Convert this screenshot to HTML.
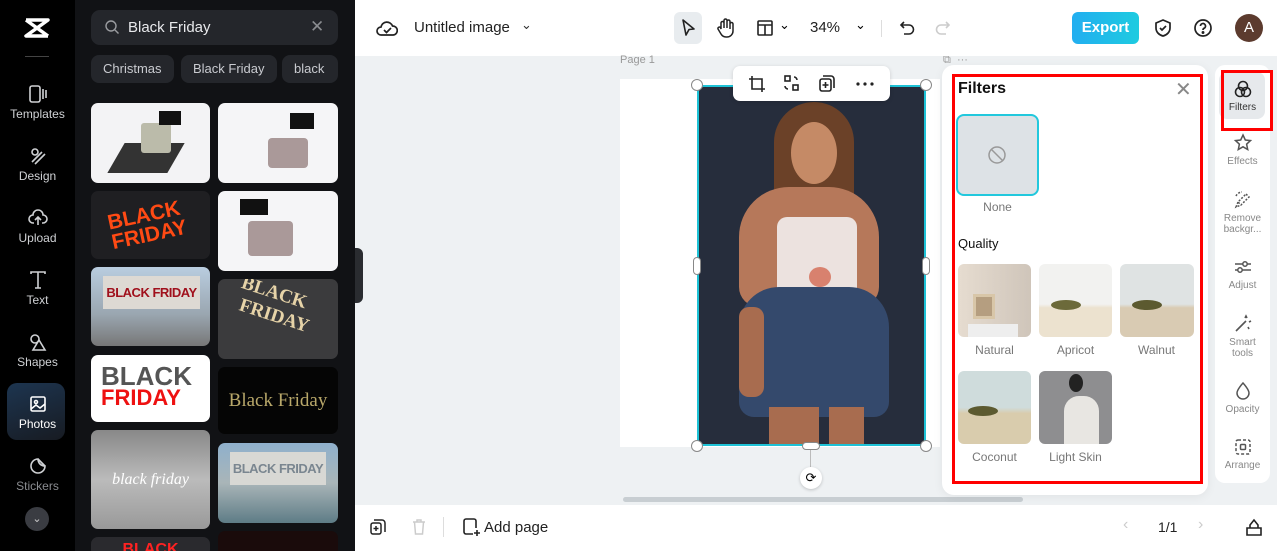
<!DOCTYPE html>
<html><head><meta charset="utf-8">
<style>
*{box-sizing:border-box;margin:0;padding:0}
html,body{width:1277px;height:551px;overflow:hidden}
body{font-family:"Liberation Sans",sans-serif;background:#eef1f3;position:relative}
.abs{position:absolute}
.rail{left:0;top:0;width:75px;height:551px;background:#000}
.ri{position:absolute;left:0;width:75px;text-align:center;color:#cfd1d4;font-size:12px}
.ri svg{display:block;margin:0 auto 3px}
.panel{left:75px;top:0;width:280px;height:551px;background:#111215}
.th{position:absolute;border-radius:7px;overflow:hidden;white-space:nowrap}
.chip{position:absolute;top:55px;height:28px;border-radius:8px;background:#24262b;color:#c9cbd0;font-size:13px;line-height:28px;padding:0 12px;white-space:nowrap}
.top{left:355px;top:0;width:922px;height:56px;background:#fff}
.bot{left:355px;top:505px;width:922px;height:46px;background:#fff}
.ft{position:absolute;border-radius:6px;overflow:hidden}
.fl{position:absolute;width:75px;text-align:center;font-size:12px;color:#777}
.rr{position:absolute;left:1215px;width:55px;text-align:center;font-size:10px;color:#888;line-height:11px}
.rr svg{display:block;margin:0 auto 3px}
</style></head><body>
<div class="abs rail"></div>
<svg class="abs" style="left:23px;top:17px" width="28" height="22" viewBox="0 0 28 22"><path d="M3 3h22L3 19h22M3 3l22 16" stroke="#fff" stroke-width="3.5" fill="none" stroke-linejoin="round"/></svg>
<div class="abs" style="left:25px;top:56px;width:24px;height:1px;background:#444"></div>
<div class="ri" style="top:84px"><svg width="20" height="20" viewBox="0 0 20 20" fill="none" stroke="#cfd1d4" stroke-width="1.6"><rect x="2" y="2" width="10" height="16" rx="2"/><path d="M15 5v10M18 6v8"/></svg>Templates</div>
<div class="ri" style="top:146px"><svg width="20" height="20" viewBox="0 0 20 20" fill="none" stroke="#cfd1d4" stroke-width="1.6"><circle cx="7" cy="6" r="3"/><path d="M4 16l10-10M7 18l10-10" /></svg>Design</div>
<div class="ri" style="top:208px"><svg width="20" height="20" viewBox="0 0 20 20" fill="none" stroke="#cfd1d4" stroke-width="1.6"><path d="M6 15H5a4 4 0 0 1 0-8 5 5 0 0 1 10 0 4 4 0 0 1 0 8h-1M10 17V10M7 12l3-3 3 3"/></svg>Upload</div>
<div class="ri" style="top:270px"><svg width="20" height="20" viewBox="0 0 20 20" fill="none" stroke="#cfd1d4" stroke-width="1.6"><path d="M3 4V2h14v2M10 2v16M7 18h6"/></svg>Text</div>
<div class="ri" style="top:332px"><svg width="20" height="20" viewBox="0 0 20 20" fill="none" stroke="#cfd1d4" stroke-width="1.6"><circle cx="7" cy="7" r="4"/><path d="M11 8l6 10H5z"/></svg>Shapes</div>
<div class="abs" style="left:7px;top:383px;width:58px;height:57px;border-radius:10px;background:linear-gradient(160deg,#1d3550,#171b22)"></div>
<div class="ri" style="top:394px;color:#fff"><svg width="20" height="20" viewBox="0 0 20 20" fill="none" stroke="#fff" stroke-width="1.6"><rect x="3" y="3" width="14" height="14" rx="1.5"/><circle cx="8" cy="8" r="1.5"/><path d="M3 15l5-4 4 3 5-4"/></svg>Photos</div>
<div class="ri" style="top:456px;color:#8a8c90"><svg width="20" height="20" viewBox="0 0 20 20" fill="none" stroke="#cfd1d4" stroke-width="1.6"><path d="M17 10a7 7 0 1 1-7-7c0 4 3 7 7 7zM10 3l7 7"/></svg>Stickers</div>
<div class="abs" style="left:25px;top:507px;width:24px;height:24px;border-radius:50%;background:#3a3c42;color:#ccc;font-size:11px;text-align:center;line-height:24px">⌄</div>

<div class="abs panel"></div>
<div class="abs" style="left:91px;top:10px;width:247px;height:35px;border-radius:9px;background:#24262b"></div>
<svg class="abs" style="left:104px;top:19px" width="16" height="16" viewBox="0 0 16 16" fill="none" stroke="#9a9ca0" stroke-width="1.4"><circle cx="7" cy="7" r="5"/><path d="M11 11l3.5 3.5"/></svg>
<div class="abs" style="left:128px;top:19px;color:#e8e9ec;font-size:15px">Black Friday</div>
<div class="abs" style="left:310px;top:17px;color:#8a8c90;font-size:17px">✕</div>
<div class="chip" style="left:91px">Christmas</div>
<div class="chip" style="left:181px">Black Friday</div>
<div class="chip" style="left:282px;width:56px;overflow:hidden">black</div>
<div class="th" style="left:91px;top:103px;width:119px;height:80px;background:#f3f3f5"><div class="abs" style="left:25px;top:40px;width:60px;height:30px;background:#333;transform:skewX(-30deg)"></div><div class="abs" style="left:50px;top:20px;width:30px;height:30px;background:#bba;border-radius:3px"></div><div class="abs" style="left:68px;top:8px;width:22px;height:14px;background:#111"></div></div>
<div class="th" style="left:218px;top:103px;width:120px;height:80px;background:#f5f5f7"><div class="abs" style="left:50px;top:35px;width:40px;height:30px;background:#a99;border-radius:4px"></div><div class="abs" style="left:72px;top:10px;width:24px;height:16px;background:#111"></div></div>
<div class="th" style="left:91px;top:191px;width:119px;height:68px;background:#1f1f22;color:#ff4a14;font:900 21px/20px 'Liberation Sans';padding:12px 0 0 18px"><div style="transform:rotate(-12deg)">BLACK<br>FRIDAY</div></div>
<div class="th" style="left:218px;top:191px;width:120px;height:80px;background:#f5f5f7"><div class="abs" style="left:30px;top:30px;width:45px;height:35px;background:#a99;border-radius:4px"></div><div class="abs" style="left:22px;top:8px;width:28px;height:16px;background:#111"></div></div>
<div class="th" style="left:91px;top:267px;width:119px;height:79px;background:linear-gradient(#b9cde0,#9aa6b0 60%,#777)"><div class="abs" style="left:12px;top:9px;width:97px;height:33px;background:#ddd9d3;color:#a0101c;font:700 13px/33px 'Liberation Sans';text-align:center;letter-spacing:-.5px">BLACK FRIDAY</div></div>
<div class="th" style="left:218px;top:279px;width:120px;height:80px;background:#3b3b3d;color:#e6d3a8;font:700 19px/22px 'Liberation Serif';padding:8px 0 0 18px"><div style="transform:rotate(18deg)">BLACK<br>&nbsp;FRIDAY</div></div>
<div class="th" style="left:91px;top:355px;width:119px;height:67px;background:#fff;font:900 26px/22px 'Liberation Sans';padding:10px 0 0 10px"><div style="color:#555">BLACK</div><div style="color:#e11;font-size:22px">FRIDAY</div></div>
<div class="th" style="left:218px;top:367px;width:120px;height:67px;background:#050505;color:#b9a86a;font:19px/67px 'Liberation Serif';text-align:center">Black Friday</div>
<div class="th" style="left:91px;top:430px;width:119px;height:99px;background:linear-gradient(#888,#bbb,#999);color:#fff;font:italic 16px/99px 'Liberation Serif';text-align:center">black friday</div>
<div class="th" style="left:218px;top:443px;width:120px;height:80px;background:linear-gradient(#8fb0cc,#a9b5b8 50%,#5e7c86)"><div class="abs" style="left:12px;top:9px;width:96px;height:33px;background:#d8d8d4;color:#7a8690;font:700 13px/33px 'Liberation Sans';text-align:center;letter-spacing:-.5px">BLACK FRIDAY</div></div>
<div class="th" style="left:91px;top:537px;width:119px;height:20px;background:#2a2a2e;color:#f22;font:900 16px/26px 'Liberation Sans';text-align:center">BLACK</div>
<div class="th" style="left:218px;top:531px;width:120px;height:30px;background:#1a0b0b"></div>
<div class="abs" style="left:355px;top:248px;width:8px;height:55px;background:#2a2c30;border-radius:0 6px 6px 0"></div>

<div class="abs top"></div>
<svg class="abs" style="left:376px;top:18px" width="22" height="20" viewBox="0 0 22 20" fill="none" stroke="#222" stroke-width="1.7"><path d="M6 17H5a4 4 0 0 1 0-8 6 6 0 0 1 11.5-1A4.5 4.5 0 0 1 17 17z"/><path d="M8 12l2.5 2.5L15 10"/></svg>
<div class="abs" style="left:414px;top:19px;font-size:15px;color:#222">Untitled image</div>
<div class="abs" style="left:521px;top:17px;font-size:13px;color:#333">⌄</div>
<div class="abs" style="left:674px;top:12px;width:28px;height:32px;border-radius:6px;background:#e8ecef"></div>
<svg class="abs" style="left:679px;top:18px" width="18" height="20" viewBox="0 0 18 20" fill="none" stroke="#222" stroke-width="1.6"><path d="M4 2l11 9-5 .5L7 17z" stroke-linejoin="round"/></svg>
<svg class="abs" style="left:716px;top:17px" width="20" height="22" viewBox="0 0 20 22" fill="none" stroke="#222" stroke-width="1.5"><path d="M5 12V6a1.5 1.5 0 0 1 3 0v5V3.5a1.5 1.5 0 0 1 3 0V11V4.5a1.5 1.5 0 0 1 3 0V12V7a1.5 1.5 0 0 1 3 0v7a6 6 0 0 1-6 6h-1a6 6 0 0 1-5-3l-3-5a1.5 1.5 0 0 1 2.5-1.5z"/></svg>
<svg class="abs" style="left:756px;top:19px" width="18" height="18" viewBox="0 0 18 18" fill="none" stroke="#222" stroke-width="1.6"><rect x="2" y="2" width="14" height="14" rx="1"/><path d="M2 6h14M9 6v10"/></svg>
<div class="abs" style="left:779px;top:17px;font-size:13px">⌄</div>
<div class="abs" style="left:810px;top:19px;font-size:15px;color:#222">34%</div>
<div class="abs" style="left:855px;top:17px;font-size:13px">⌄</div>
<div class="abs" style="left:881px;top:20px;width:1px;height:17px;background:#ddd"></div>
<svg class="abs" style="left:898px;top:19px" width="18" height="18" viewBox="0 0 18 18" fill="none" stroke="#222" stroke-width="1.6"><path d="M6 3L3 6l3 3M3 6h8a4.5 4.5 0 0 1 0 9H6"/></svg>
<svg class="abs" style="left:934px;top:19px" width="18" height="18" viewBox="0 0 18 18" fill="none" stroke="#ccc" stroke-width="1.6"><path d="M12 3l3 3-3 3M15 6H7a4.5 4.5 0 0 0 0 9h5"/></svg>
<div class="abs" style="left:1072px;top:12px;width:67px;height:32px;border-radius:6px;background:linear-gradient(90deg,#22aef0,#1ecbe0);color:#fff;font:700 15px/32px 'Liberation Sans';text-align:center">Export</div>
<svg class="abs" style="left:1153px;top:18px" width="20" height="20" viewBox="0 0 20 20" fill="none" stroke="#222" stroke-width="1.7"><path d="M10 2l7 3v5c0 4-3 7-7 8-4-1-7-4-7-8V5z"/><path d="M7 10l2 2 4-4"/></svg>
<svg class="abs" style="left:1193px;top:18px" width="20" height="20" viewBox="0 0 20 20" fill="none" stroke="#222" stroke-width="1.7"><circle cx="10" cy="10" r="8"/><path d="M7.5 8a2.5 2.5 0 1 1 3.5 2.3c-.7.3-1 .8-1 1.7"/><circle cx="10" cy="14.5" r=".6" fill="#222"/></svg>
<div class="abs" style="left:1235px;top:14px;width:28px;height:28px;border-radius:50%;background:#5c3b2e;color:#fff;font-size:15px;text-align:center;line-height:28px">A</div>

<div class="abs" style="left:620px;top:54px;font-size:11px;color:#999">Page 1</div>
<div class="abs" style="left:943px;top:54px;font-size:11px;color:#999">⧉ &nbsp;···</div>
<div class="abs" style="left:620px;top:79px;width:320px;height:368px;background:#fff"></div>
<div class="abs" style="left:697px;top:85px;width:229px;height:361px;background:#262d3c;border:2px solid #1ec2d6;overflow:hidden">
 <div class="abs" style="left:75px;top:15px;width:80px;height:170px;border-radius:40px 40px 10px 10px;background:#6b4128"></div>
 <div class="abs" style="left:92px;top:35px;width:46px;height:62px;border-radius:50%;background:#c58a66"></div>
 <div class="abs" style="left:40px;top:100px;width:140px;height:120px;border-radius:50px 50px 20px 20px;background:#b6785a"></div>
 <div class="abs" style="left:78px;top:130px;width:80px;height:95px;border-radius:10px;background:#ece2df"></div>
 <div class="abs" style="left:110px;top:180px;width:22px;height:20px;border-radius:50%;background:#d8816e"></div>
 <div class="abs" style="left:40px;top:200px;width:150px;height:130px;border-radius:40px 40px 15px 15px;background:#34496c"></div>
 <div class="abs" style="left:40px;top:220px;width:25px;height:90px;border-radius:10px;background:#a86c4f"></div>
 <div class="abs" style="left:70px;top:320px;width:50px;height:45px;background:#a86c4f"></div>
 <div class="abs" style="left:130px;top:320px;width:35px;height:45px;background:#a86c4f"></div>
</div>
<div class="abs" style="left:733px;top:66px;width:157px;height:35px;border-radius:7px;background:#fff;box-shadow:0 1px 4px rgba(0,0,0,.15)"></div>
<svg class="abs" style="left:748px;top:74px" width="140" height="20" viewBox="0 0 140 20" fill="none" stroke="#222" stroke-width="1.6"><path d="M4 2v13h13M1 5h13v13"/><rect x="37" y="2" width="5" height="5"/><rect x="45" y="11" width="5" height="5"/><path d="M46 3a3 3 0 0 1 3 3M40 15a3 3 0 0 1-3-3"/><rect x="72" y="5" width="11" height="12" rx="2"/><path d="M75 2h8a3 3 0 0 1 3 3v9M77.5 8v6M74.5 11h6"/><circle cx="110" cy="10" r=".8" fill="#222"/><circle cx="117" cy="10" r=".8" fill="#222"/><circle cx="124" cy="10" r=".8" fill="#222"/></svg>
<div class="abs" style="left:691px;top:79px;width:12px;height:12px;border-radius:50%;background:#fff;border:1px solid #888"></div>
<div class="abs" style="left:920px;top:79px;width:12px;height:12px;border-radius:50%;background:#fff;border:1px solid #888"></div>
<div class="abs" style="left:691px;top:440px;width:12px;height:12px;border-radius:50%;background:#fff;border:1px solid #888"></div>
<div class="abs" style="left:920px;top:440px;width:12px;height:12px;border-radius:50%;background:#fff;border:1px solid #888"></div>
<div class="abs" style="left:693px;top:257px;width:8px;height:18px;border-radius:4px;background:#fff;border:1px solid #888"></div>
<div class="abs" style="left:922px;top:257px;width:8px;height:18px;border-radius:4px;background:#fff;border:1px solid #888"></div>
<div class="abs" style="left:802px;top:442px;width:18px;height:8px;border-radius:4px;background:#fff;border:1px solid #888"></div>
<div class="abs" style="left:810px;top:450px;width:1px;height:17px;background:#bbb"></div>
<div class="abs" style="left:800px;top:467px;width:22px;height:22px;border-radius:50%;background:#fff;box-shadow:0 1px 3px rgba(0,0,0,.2);font-size:13px;text-align:center;line-height:22px">⟳</div>
<div class="abs" style="left:623px;top:497px;width:400px;height:5px;border-radius:3px;background:#c8ced2"></div>

<div class="abs" style="left:942px;top:65px;width:266px;height:430px;border-radius:12px;background:#fff;box-shadow:0 2px 10px rgba(0,0,0,.06)"></div>
<div class="abs" style="left:952px;top:74px;width:251px;height:410px;border:3px solid #f00"></div>
<div class="abs" style="left:958px;top:80px;font:700 16px 'Liberation Sans';color:#111">Filters</div>
<div class="abs" style="left:1175px;top:77px;font-size:20px;color:#888">✕</div>
<div class="abs" style="left:956px;top:114px;width:83px;height:82px;border-radius:8px;background:#dde2e6;border:2px solid #22c8dd"></div>
<svg class="abs" style="left:986px;top:144px" width="22" height="22" viewBox="0 0 22 22" fill="none" stroke="#999" stroke-width="1.5"><circle cx="11" cy="11" r="8"/><path d="M5.5 5.5l11 11"/></svg>
<div class="fl" style="left:960px;top:200px">None</div>
<div class="abs" style="left:958px;top:236px;font-size:13px;color:#111">Quality</div>
<div class="ft" style="left:958px;top:264px;width:73px;height:73px;background:linear-gradient(90deg,#e6dcd0,#cfc5ba)"><div class="abs" style="left:15px;top:30px;width:22px;height:25px;background:#b59e80;border:3px solid #d8c6a8"></div><div class="abs" style="left:10px;top:60px;width:50px;height:13px;background:#eee"></div></div>
<div class="ft" style="left:1039px;top:264px;width:73px;height:73px;background:linear-gradient(#f2f2f0 55%,#ece2cf 60%)"><div class="abs" style="left:12px;top:36px;width:30px;height:10px;background:#6c6a3a;border-radius:50%"></div></div>
<div class="ft" style="left:1120px;top:264px;width:74px;height:73px;background:linear-gradient(#dfe3e3 55%,#d9cbb3 60%)"><div class="abs" style="left:12px;top:36px;width:30px;height:10px;background:#5c5a30;border-radius:50%"></div></div>
<div class="fl" style="left:957px;top:343px">Natural</div>
<div class="fl" style="left:1038px;top:343px">Apricot</div>
<div class="fl" style="left:1119px;top:343px">Walnut</div>
<div class="ft" style="left:958px;top:371px;width:73px;height:73px;background:linear-gradient(#cfdcdc 50%,#d9ccad 58%)"><div class="abs" style="left:10px;top:35px;width:30px;height:10px;background:#5c5a30;border-radius:50%"></div></div>
<div class="ft" style="left:1039px;top:371px;width:73px;height:73px;background:#8e8e90"><div class="abs" style="left:25px;top:25px;width:35px;height:48px;background:#e8e6e2;border-radius:15px 15px 0 0"></div><div class="abs" style="left:30px;top:3px;width:14px;height:18px;background:#222;border-radius:50%"></div></div>
<div class="fl" style="left:957px;top:450px">Coconut</div>
<div class="fl" style="left:1038px;top:450px">Light Skin</div>

<div class="abs" style="left:1215px;top:65px;width:55px;height:418px;border-radius:10px;background:#fff"></div>
<div class="abs" style="left:1219px;top:72px;width:46px;height:47px;border-radius:8px;background:#e6e9ec"></div>
<div class="abs" style="left:1221px;top:70px;width:52px;height:61px;border:3px solid #f00"></div>
<div class="rr" style="top:79px;color:#333"><svg width="20" height="20" viewBox="0 0 20 20" fill="none" stroke="#222" stroke-width="1.6"><circle cx="10" cy="7" r="4.5"/><circle cx="7" cy="13" r="4.5"/><circle cx="13" cy="13" r="4.5"/></svg>Filters</div>
<div class="rr" style="top:133px"><svg width="20" height="20" viewBox="0 0 20 20" fill="none" stroke="#555" stroke-width="1.5"><path d="M10 2l2.3 5 5.2.6-3.9 3.6 1.1 5.3L10 13.8 5.3 16.5l1.1-5.3L2.5 7.6 7.7 7z"/></svg>Effects</div>
<div class="rr" style="top:190px"><svg width="20" height="20" viewBox="0 0 20 20" fill="none" stroke="#555" stroke-width="1.5"><path d="M13 4l3 3-8 8-3-3zM5 12l-2 5 5-2M3 6a7 7 0 0 1 6-4" stroke-dasharray="2 1.5"/></svg>Remove<br>backgr...</div>
<div class="rr" style="top:257px"><svg width="20" height="20" viewBox="0 0 20 20" fill="none" stroke="#555" stroke-width="1.5"><path d="M2 7h16M2 13h16"/><circle cx="12" cy="7" r="2.2" fill="#fff"/><circle cx="7" cy="13" r="2.2" fill="#fff"/></svg>Adjust</div>
<div class="rr" style="top:314px"><svg width="20" height="20" viewBox="0 0 20 20" fill="none" stroke="#555" stroke-width="1.6"><path d="M3 17L13 7M12 4l1-2 1 2M16 8l2-1M15 13l1 2"/></svg>Smart<br>tools</div>
<div class="rr" style="top:381px"><svg width="20" height="20" viewBox="0 0 20 20" fill="none" stroke="#555" stroke-width="1.5"><path d="M10 2s-6 6.5-6 10a6 6 0 0 0 12 0c0-3.5-6-10-6-10z"/></svg>Opacity</div>
<div class="rr" style="top:437px"><svg width="20" height="20" viewBox="0 0 20 20" fill="none" stroke="#555" stroke-width="1.5"><rect x="3" y="3" width="14" height="14" rx="2" stroke-dasharray="3 2"/><rect x="7.5" y="7.5" width="5" height="5" rx="1"/></svg>Arrange</div>

<div class="abs bot"></div>
<svg class="abs" style="left:369px;top:518px" width="18" height="18" viewBox="0 0 18 18" fill="none" stroke="#222" stroke-width="1.5"><rect x="2" y="5" width="10" height="11" rx="2"/><path d="M5 2h8a3 3 0 0 1 3 3v9M7 8v5M4.5 10.5h5"/></svg>
<svg class="abs" style="left:411px;top:518px" width="16" height="18" viewBox="0 0 16 18" fill="none" stroke="#ccc" stroke-width="1.5"><path d="M2 4h12M6 4V2h4v2M3.5 4l1 12h7l1-12"/></svg>
<div class="abs" style="left:443px;top:517px;width:1px;height:20px;background:#ddd"></div>
<svg class="abs" style="left:461px;top:517px" width="20" height="20" viewBox="0 0 20 20" fill="none" stroke="#222" stroke-width="1.6"><path d="M12 17H5a2 2 0 0 1-2-2V4a2 2 0 0 1 2-2h8a2 2 0 0 1 2 2v7M16 13v6M13 16h6"/></svg>
<div class="abs" style="left:484px;top:519px;font-size:15px;color:#222">Add page</div>
<div class="abs" style="left:1123px;top:516px;font-size:16px;color:#ccc">‹</div>
<div class="abs" style="left:1158px;top:519px;font-size:14px;color:#222">1/1</div>
<div class="abs" style="left:1198px;top:516px;font-size:16px;color:#ccc">›</div>
<svg class="abs" style="left:1245px;top:517px" width="18" height="20" viewBox="0 0 18 20" fill="none" stroke="#222" stroke-width="1.6"><path d="M2 11h14v7H2zM5 11V8l4-5 4 5v3"/></svg>
</body></html>
